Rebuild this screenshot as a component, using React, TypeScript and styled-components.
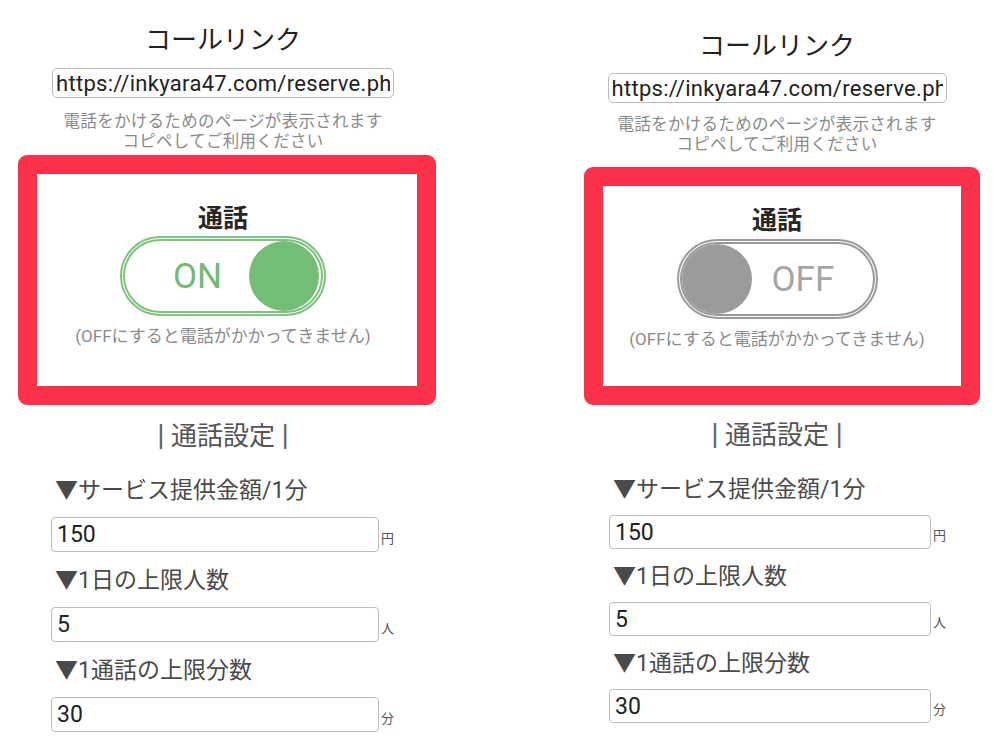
import styled, { createGlobalStyle } from "styled-components";

const GlobalStyle = createGlobalStyle`
  html, body {
    margin: 0;
    padding: 0;
    background: #ffffff;
  }
  body {
    font-family: Roboto, "Noto Sans CJK JP", sans-serif;
  }
  * {
    box-sizing: border-box;
  }
`;

type Layout = {
  width: number;
  shift: number;
  top: number;
  urlGap: number;
  urlWidth: number;
  hintGap: number;
  boxGap: number;
  boxTop: number;
  boxBottom: number;
  toggleGap: number;
  toggleWidth: number;
  noteGap: number;
  headingGap: number;
  firstLabelGap: number;
  labelGap: number;
  inputGap: number;
  inputWidth: number;
  inputHeight: number;
  indent: number;
};

const leftLayout: Layout = {
  width: 418,
  shift: 8,
  top: 23,
  urlGap: 15,
  urlWidth: 342,
  hintGap: 12,
  boxGap: 5,
  boxTop: 27,
  boxBottom: 40,
  toggleGap: 5,
  toggleWidth: 206,
  noteGap: 10,
  headingGap: 15,
  firstLabelGap: 27,
  labelGap: 16,
  inputGap: 13,
  inputWidth: 328,
  inputHeight: 35,
  indent: 33,
};

const rightLayout: Layout = {
  width: 396,
  shift: 10,
  top: 29,
  urlGap: 14,
  urlWidth: 339,
  hintGap: 10,
  boxGap: 14,
  boxTop: 17,
  boxBottom: 37,
  toggleGap: 6,
  toggleWidth: 201,
  noteGap: 10,
  headingGap: 14,
  firstLabelGap: 27,
  labelGap: 15,
  inputGap: 12,
  inputWidth: 322,
  inputHeight: 34,
  indent: 25,
};

const Page = styled.div`
  display: flex;
  align-items: flex-start;
  gap: 148px;
  padding-left: 18px;
  width: 1000px;
  height: 754px;
  overflow: hidden;
`;

const Panel = styled.div<{ $width: number; $shift: number; $top: number }>`
  width: ${(p) => p.$width}px;
  padding-top: ${(p) => p.$top}px;
  padding-right: ${(p) => p.$shift}px;
  display: flex;
  flex-direction: column;
  align-items: center;
`;

const Title = styled.div`
  font-family: "Noto Sans CJK JP", sans-serif;
  font-size: 26px;
  line-height: 30px;
  color: #222;
`;

const UrlField = styled.input<{ $gap: number; $width: number }>`
  margin-top: ${(p) => p.$gap}px;
  width: ${(p) => p.$width}px;
  height: 30px;
  padding: 0 3px;
  border: 1.5px solid #bcbcbc;
  border-radius: 5px;
  font-family: Roboto, sans-serif;
  font-size: 22px;
  letter-spacing: 0.3px;
  color: #222;
  background: #fff;
  outline: none;
`;

const Hint = styled.div<{ $gap: number }>`
  margin-top: ${(p) => p.$gap}px;
  display: flex;
  flex-direction: column;
  align-items: center;
`;

const HintLine = styled.div`
  height: 20px;
  font-family: "Noto Sans CJK JP", sans-serif;
  font-size: 16.5px;
  line-height: 20px;
  color: #8a8a8a;
  letter-spacing: 0.3px;
  white-space: nowrap;
`;

const Frame = styled.div<{ $gap: number; $shift: number; $top: number; $bottom: number }>`
  align-self: stretch;
  margin-top: ${(p) => p.$gap}px;
  margin-right: -${(p) => p.$shift}px;
  padding: ${(p) => p.$top}px ${(p) => p.$shift}px ${(p) => p.$bottom}px 0;
  border: 19px solid #fb3049;
  border-radius: 9px;
  display: flex;
  flex-direction: column;
  align-items: center;
`;

const CallLabel = styled.div`
  font-family: "Noto Sans CJK JP", sans-serif;
  font-size: 25px;
  font-weight: 700;
  line-height: 30px;
  color: #262626;
`;

const Track = styled.div<{ $on: boolean; $gap: number; $width: number }>`
  margin-top: ${(p) => p.$gap}px;
  width: ${(p) => p.$width}px;
  height: 80px;
  border: 5px double ${(p) => (p.$on ? "#7fc07f" : "#9a9a9a")};
  border-radius: 40px;
  display: flex;
  align-items: center;
  justify-content: ${(p) => (p.$on ? "space-between" : "flex-start")};
  gap: 20px;
  padding: ${(p) => (p.$on ? "0 2px 0 48px" : "0")};
`;

const Knob = styled.div<{ $on: boolean }>`
  width: 70px;
  height: 70px;
  border-radius: 50%;
  background: ${(p) => (p.$on ? "#74bd74" : "#9b9b9b")};
  flex-shrink: 0;
`;

const StateText = styled.span<{ $on: boolean }>`
  font-family: Roboto, sans-serif;
  font-size: 35px;
  line-height: 1;
  color: ${(p) => (p.$on ? "#76b976" : "#a5a5a5")};
`;

const Note = styled.div<{ $gap: number }>`
  margin-top: ${(p) => p.$gap}px;
  font-family: Roboto, "Noto Sans CJK JP", sans-serif;
  font-size: 17px;
  line-height: 20px;
  color: #8a8a8a;
`;

const Heading = styled.div<{ $gap: number }>`
  margin-top: ${(p) => p.$gap}px;
  font-family: Roboto, "Noto Sans CJK JP", sans-serif;
  font-size: 26px;
  line-height: 30px;
  color: #555;
`;

const Bar = styled.span`
  font-size: 30px;
  color: #666;
`;

const Form = styled.div<{ $indent: number }>`
  align-self: stretch;
  padding-left: ${(p) => p.$indent}px;
  display: flex;
  flex-direction: column;
  align-items: flex-start;
`;

const FieldLabel = styled.div<{ $gap: number }>`
  margin-top: ${(p) => p.$gap}px;
  padding-left: 4px;
  font-family: Roboto, "Noto Sans CJK JP", sans-serif;
  font-size: 23px;
  line-height: 26px;
  color: #4a4a4a;
`;

const FieldRow = styled.div<{ $gap: number }>`
  margin-top: ${(p) => p.$gap}px;
  display: flex;
  align-items: flex-end;
`;

const NumberField = styled.input<{ $width: number; $height: number }>`
  width: ${(p) => p.$width}px;
  height: ${(p) => p.$height}px;
  padding: 0 5px;
  border: 1.5px solid #bdbdbd;
  border-radius: 4px;
  font-family: Roboto, sans-serif;
  font-size: 23px;
  color: #222;
  background: #fff;
  outline: none;
`;

const Unit = styled.span`
  margin: 0 0 7px 2px;
  font-family: "Noto Sans CJK JP", sans-serif;
  font-size: 13px;
  line-height: 14px;
  color: #555;
`;

const fields = [
  { label: "▼サービス提供金額/1分", value: "150", unit: "円" },
  { label: "▼1日の上限人数", value: "5", unit: "人" },
  { label: "▼1通話の上限分数", value: "30", unit: "分" },
];

function SettingsPanel({ layout, on }: { layout: Layout; on: boolean }) {
  const l = layout;
  const stateText = <StateText $on={on}>{on ? "ON" : "OFF"}</StateText>;
  const knob = <Knob $on={on} />;
  return (
    <Panel $width={l.width} $shift={l.shift} $top={l.top}>
      <Title>コールリンク</Title>
      <UrlField
        $gap={l.urlGap}
        $width={l.urlWidth}
        readOnly
        value="https://inkyara47.com/reserve.php"
      />
      <Hint $gap={l.hintGap}>
        <HintLine>電話をかけるためのページが表示されます</HintLine>
        <HintLine>コピペしてご利用ください</HintLine>
      </Hint>
      <Frame $gap={l.boxGap} $shift={l.shift} $top={l.boxTop} $bottom={l.boxBottom}>
        <CallLabel>通話</CallLabel>
        <Track $on={on} $gap={l.toggleGap} $width={l.toggleWidth}>
          {on ? stateText : knob}
          {on ? knob : stateText}
        </Track>
        <Note $gap={l.noteGap}>(OFFにすると電話がかかってきません)</Note>
      </Frame>
      <Heading $gap={l.headingGap}>
        <Bar>|</Bar> 通話設定 <Bar>|</Bar>
      </Heading>
      <Form $indent={l.indent}>
        {fields.map((f, i) => (
          <div key={f.label}>
            <FieldLabel $gap={i === 0 ? l.firstLabelGap : l.labelGap}>{f.label}</FieldLabel>
            <FieldRow $gap={l.inputGap}>
              <NumberField
                $width={l.inputWidth}
                $height={l.inputHeight}
                readOnly
                value={f.value}
              />
              <Unit>{f.unit}</Unit>
            </FieldRow>
          </div>
        ))}
      </Form>
    </Panel>
  );
}

function App() {
  return (
    <>
      <GlobalStyle />
      <Page>
        <SettingsPanel layout={leftLayout} on={true} />
        <SettingsPanel layout={rightLayout} on={false} />
      </Page>
    </>
  );
}

export default App;
